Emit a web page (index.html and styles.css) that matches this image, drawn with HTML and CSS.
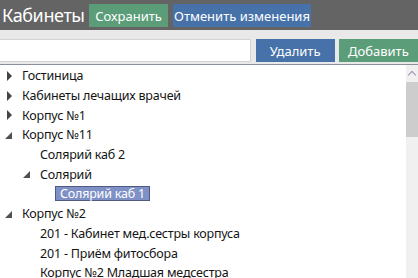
FILE: index.html
```html
<!DOCTYPE html>
<html lang="ru">
<head>
  <meta charset="UTF-8" />
  <title>Кабинеты</title>
  <link rel="stylesheet" href="styles.css">
</head>
<body>

  <!-- заголовок -->
  <div class="topbar">
    <span class="title">Кабинеты</span>
    <button class="btn green save">Сохранить</button>
    <button class="btn blue cancel">Отменить изменения</button>
  </div>

  <!-- поиск и действия -->
  <div class="toolbar">
    <input type="text" class="search" />
    <button class="btn blue del">Удалить</button>
    <button class="btn green add">Добавить</button>
  </div>

  <!-- дерево кабинетов -->
  <div class="tree-wrap">
    <ul class="tree">
      <li class="node"><span class="arrow closed"></span><span class="label">Гостиница</span></li>
      <li class="node"><span class="arrow closed"></span><span class="label">Кабинеты лечащих врачей</span></li>
      <li class="node"><span class="arrow closed"></span><span class="label">Корпус №1</span></li>
      <li class="node"><span class="arrow open"></span><span class="label">Корпус №11</span></li>
      <li class="node lvl1"><span class="arrow"></span><span class="label">Солярий каб 2</span></li>
      <li class="node lvl1"><span class="arrow open"></span><span class="label">Солярий</span></li>
      <li class="node lvl2"><span class="arrow"></span><span class="label selected">Солярий каб 1</span></li>
      <li class="node"><span class="arrow open"></span><span class="label">Корпус №2</span></li>
      <li class="node lvl1"><span class="arrow"></span><span class="label">201 - Кабинет мед.сестры корпуса</span></li>
      <li class="node lvl1"><span class="arrow"></span><span class="label">201 - Приём фитосбора</span></li>
      <li class="node lvl1"><span class="arrow"></span><span class="label">Корпус №2 Младшая медсестра</span></li>
    </ul>
    <div class="scrollbar">
      <div class="scroll-up"></div>
      <div class="scroll-thumb"></div>
    </div>
  </div>

</body>
</html>
```

FILE: styles.css
```css
body {
  margin: 0;
  font-family: "Noto Sans", "Open Sans", sans-serif;
  background: #fff;
  overflow: hidden;
}

.topbar {
  height: 30px;
  background: #646464;
  display: flex;
  align-items: center;
}

.title {
  color: #fff;
  font-size: 18px;
  padding-left: 2px;
  width: 87px;
  letter-spacing: -0.4px;
}

.btn {
  border: none;
  color: #fff;
  font-family: inherit;
  font-size: 13px;
  height: 23px;
  padding: 0;
  cursor: pointer;
}

.green {
  background: #5b9d79;
}

.blue {
  background: #4672a9;
}

.save {
  width: 79px;
  margin-top: 1px;
}

.cancel {
  width: 138px;
  margin-left: 5px;
  margin-top: 1px;
}

.toolbar {
  height: 35px;
  background: #e9e9e9;
  display: flex;
  align-items: flex-start;
  padding-top: 9px;
  box-sizing: border-box;
  border-bottom: 1px solid #8a9098;
}

.search {
  width: 253px;
  height: 23px;
  box-sizing: border-box;
  border: 1px solid #d4d4d4;
  border-left: none;
  margin: 0;
  outline: none;
}

.del {
  width: 80px;
  margin-left: 5px;
}

.add {
  width: 80px;
  margin-left: 4px;
}

.tree-wrap {
  display: flex;
  height: 213px;
}

.tree {
  list-style: none;
  margin: 0;
  padding: 1px 0 0 0;
  flex: 1;
}

.node {
  height: 19.7px;
  display: flex;
  align-items: center;
  font-size: 12.5px;
  letter-spacing: -0.2px;
  color: #141414;
  white-space: nowrap;
}

.lvl1 {
  padding-left: 18px;
}

.lvl2 {
  padding-left: 33px;
}

.arrow {
  width: 22px;
  height: 10px;
  flex: none;
  position: relative;
}

.arrow.closed::before {
  content: "";
  position: absolute;
  left: 7px;
  top: 0;
  border-left: 5px solid #444;
  border-top: 5px solid transparent;
  border-bottom: 5px solid transparent;
}

.arrow.open::before {
  content: "";
  position: absolute;
  left: 5px;
  top: 2px;
  border-right: 7px solid #505050;
  border-top: 7px solid transparent;
}

.label.selected {
  background: #7e90c5;
  border: 1px solid #4f5b82;
  color: #fff;
  padding: 0 4px;
  line-height: 13px;
}

.scrollbar {
  width: 12px;
  flex: none;
  background: #f0f0f0;
}

.scroll-up {
  height: 17px;
  position: relative;
}

.scroll-up::before {
  content: "";
  position: absolute;
  left: 3px;
  top: 7px;
  width: 5px;
  height: 5px;
  border-left: 1.5px solid #a48fb8;
  border-top: 1.5px solid #a48fb8;
  transform: rotate(45deg);
}

.scroll-thumb {
  height: 55px;
  background: #cdcdcd;
}
```
